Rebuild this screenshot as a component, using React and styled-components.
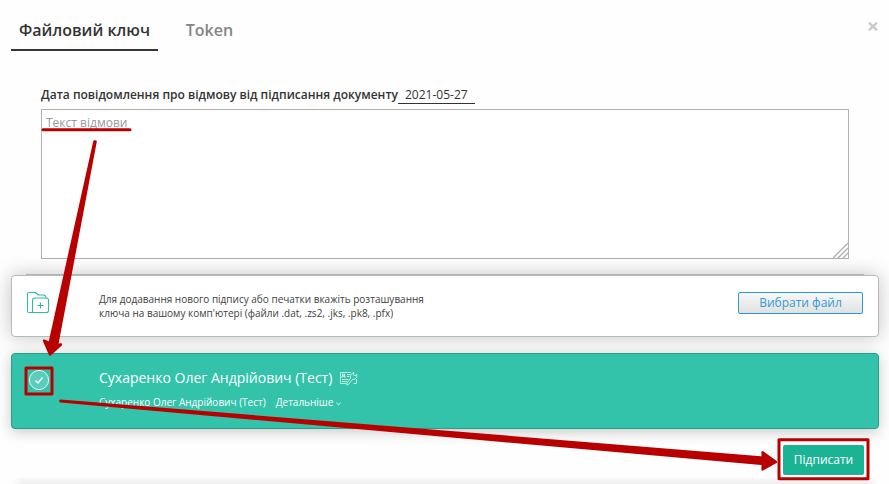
import React from "react";
import styled, { createGlobalStyle } from "styled-components";

const GlobalStyle = createGlobalStyle`
  *, *::before, *::after { box-sizing: border-box; }
  body { margin: 0; background: #fff; overflow: hidden; font-family: "Open Sans", "Noto Sans", sans-serif; color: #333; }
  button { font-family: inherit; padding: 0; }
`;

const Dialog = styled.main`
  position: relative;
  width: 889px;
  height: 484px;
  overflow: hidden;
  display: flex;
  flex-direction: column;
  padding: 0 10px 0 11px;
  background: #fefefe;
`;

const Header = styled.header`
  display: flex;
  flex: none;
  align-items: flex-start;
  justify-content: space-between;
  height: 51px;
`;

const Tabs = styled.nav`
  display: flex;
  gap: 20px;
  height: 51px;
`;

const Tab = styled.button`
  width: ${(p) => (p.$active ? 147 : 63)}px;
  height: 51px;
  padding-top: 10px;
  border: 0;
  border-bottom: 2px solid ${(p) => (p.$active ? "#333537" : "transparent")};
  background: none;
  color: ${(p) => (p.$active ? "#333" : "#858585")};
  font-size: 16px;
  font-weight: 600;
  line-height: 22px;
  white-space: nowrap;
`;

const CloseButton = styled.button`
  display: flex;
  margin: 22px 1px 0 0;
  border: 0;
  background: none;
`;

const Form = styled.section`
  flex: none;
  padding: 34px 30px 0;
  height: 224px;
`;

const DateRow = styled.div`
  display: flex;
  height: 24px;
  font-size: 12px;
  line-height: 20px;
  white-space: nowrap;
`;

const DateLabel = styled.span`
  width: 357px;
  font-weight: 600;
`;

const DateValue = styled.span`
  width: 77px;
  height: 19px;
  padding-left: 7px;
  border-bottom: 1px solid #333;
`;

const RefusalField = styled.div`
  display: flex;
  justify-content: space-between;
  height: 150px;
  padding: 4px 0 0 4px;
  border: 1px solid #b0b0b0;
  background: #fff;
  color: #999;
  font-size: 12px;
  line-height: 17px;
`;

const Grip = styled.svg`
  align-self: flex-end;
`;

const Card = styled.section`
  display: flex;
  flex: none;
  height: ${(p) => (p.$selected ? 76 : 62)}px;
  margin-bottom: 16px;
  border: 1px solid ${(p) => (p.$selected ? "#2b9d88" : "#b9b9b9")};
  border-radius: 4px;
  background: ${(p) => (p.$selected ? "#33c2aa" : "#fff")};
  color: ${(p) => (p.$selected ? "#fff" : "#404040")};
  box-shadow: ${(p) => (p.$selected ? "0 3px 14px rgba(0,0,0,.22)" : "0 0 20px rgba(0,0,0,.24)")};
`;

const IconCell = styled.div`
  width: 87px;
  padding: 15px 0 0 14px;
`;

const Hint = styled.p`
  flex: 1;
  margin: 16px 0 0;
  font-size: 10px;
  line-height: 14px;
`;

const ChooseButton = styled.button`
  width: 125px;
  height: 22px;
  margin: 16px 15px 0 0;
  border: 1px solid #249ad8;
  border-radius: 2px;
  background: linear-gradient(#f8f8f8, #e1e1e1);
  color: #309bd6;
  font-size: 12px;
  line-height: 20px;
`;

const Owner = styled.div`
  padding-top: 14px;
`;

const OwnerName = styled.h2`
  display: flex;
  align-items: center;
  gap: 7px;
  height: 20px;
  margin: 0;
  font-size: 14px;
  font-weight: 400;
  line-height: 20px;
  white-space: nowrap;
`;

const OwnerMeta = styled.div`
  display: flex;
  gap: 10px;
  margin-top: 7px;
  font-size: 10px;
  line-height: 14px;
`;

const Details = styled.span`
  display: flex;
  align-items: center;
  gap: 3px;

  svg { margin-top: 3px; }
`;

const Footer = styled.footer`
  display: flex;
  flex: none;
  justify-content: flex-end;
  height: 41px;
  padding-right: 15px;
`;

const SignButton = styled.button`
  width: 81px;
  height: 30px;
  border: 0;
  border-radius: 2px;
  background: #1ab394;
  color: #fff;
  font-size: 12px;
  line-height: 30px;
`;

const BottomShade = styled.div`
  flex: none;
  height: 10px;
  background: linear-gradient(transparent -40%, rgba(0, 0, 0, 0.08));
  margin: -8px 0 0;
  mask-image: linear-gradient(to right, transparent, #000 12px, #000 calc(100% - 12px), transparent);
`;

const Divider = styled.div`
  flex: none;
  height: 1px;
  margin: -1px 15px 0;
  background: #c9c9c9;
`;

const Marks = styled.svg`
  position: absolute;
  inset: 0;
  pointer-events: none;
`;

function FolderIcon() {
  return (
    <svg width="24" height="24" viewBox="0 0 24 24" fill="none" stroke="#2fbba4" strokeWidth="1.1" strokeLinejoin="round">
      <path d="M6.5 21.5H3Q1.5 21.5 1.5 20V3.5Q1.5 1.5 3.5 1.5H9.5L12.5 4H17.5Q19.7 4 20 7" />
      <path d="M6.5 21.5V9.5Q6.5 7 9 7H20Q22.5 7 22.5 9V19.5Q22.5 21.5 20.5 21.5H5.5" />
      <path d="M11.5 14.5H17.5M14.5 11.5V17.5" />
    </svg>
  );
}

function CheckIcon() {
  return (
    <svg width="26" height="24" viewBox="0 0 26 24" fill="none" stroke="#fff">
      <circle cx="13" cy="11" r="9.6" fill="#fff" fillOpacity=".2" strokeOpacity=".85" />
      <path d="M9.5 11.5L12 14L16.5 8.5" strokeWidth="1.4" />
    </svg>
  );
}

function KeyCardIcon() {
  return (
    <svg width="19" height="15" viewBox="0 0 19 15" fill="none" stroke="#fff" strokeWidth=".8" strokeOpacity=".85">
      <path d="M12 1.5H1.5V12.5H7.5M14.5 12.5H17.5V8" />
      <path d="M3 7V5.2H6V7M3.5 3H5.5V5H3.5ZM8 3.5H11M8 5.5H10.5M3 8.5H9.5M3 10.5H8" />
      <path d="M11.6 7.2Q10.8 4.8 12.5 3L15 1.4L14.3 3.7L16 4.8L17.8 3.3Q18.7 6.7 16 8Q14.8 8.6 13.7 8.3L9.4 13.5L7.8 14L8 12.1Z" />
    </svg>
  );
}

function Annotations() {
  return (
    <Marks width="889" height="484" viewBox="0 0 889 484" fill="none" stroke="#b90000" strokeLinecap="round" strokeLinejoin="round">
      <path d="M43 129.8H130" strokeWidth="3" />
      <path d="M94.5 141.5L95.5 141.5L57 345L49.5 344Z" fill="#b90000" strokeWidth="2.6" />
      <path d="M50 354.5L44 340.5L50 343L56 345L61 344.5Z" fill="#b90000" strokeWidth="2.4" />
      <rect x="26" y="368" width="26" height="26" strokeWidth="3" />
      <path d="M60.5 400.8L764 457.7L764 464L60.5 401.3Z" fill="#b90000" strokeWidth="2.6" />
      <path d="M776 462L762.5 452.3L763 461L762.5 469.5Z" fill="#b90000" strokeWidth="2.4" />
      <rect x="779" y="439.8" width="89" height="39" strokeWidth="3" />
    </Marks>
  );
}

export default function App() {
  return (
    <>
      <GlobalStyle />
      <Dialog>
        <Header>
          <Tabs>
            <Tab $active>Файловий ключ</Tab>
            <Tab>Token</Tab>
          </Tabs>
          <CloseButton aria-label="Закрити">
            <svg width="10" height="9" viewBox="0 0 10 9" stroke="#c9c9c9" strokeWidth="2.4">
              <path d="M1 .7L9 8.3M9 .7L1 8.3" />
            </svg>
          </CloseButton>
        </Header>
        <Form>
          <DateRow>
            <DateLabel>Дата повідомлення про відмову від підписання документу</DateLabel>
            <DateValue>2021-05-27</DateValue>
          </DateRow>
          <RefusalField>
            <span>Текст відмови</span>
            <Grip width="15" height="15" viewBox="0 0 15 15" stroke="#b0b0b0" strokeWidth="1.4">
              <path d="M0 15L15 0M5 15L15 5M10 15L15 10" />
            </Grip>
          </RefusalField>
        </Form>
        <Divider />
        <Card>
          <IconCell><FolderIcon /></IconCell>
          <Hint>
            Для додавання нового підпису або печатки вкажіть розташування<br />
            ключа на вашому комп'ютері (файли .dat, .zs2, .jks, .pk8, .pfx)
          </Hint>
          <ChooseButton>Вибрати файл</ChooseButton>
        </Card>
        <Card $selected>
          <IconCell><CheckIcon /></IconCell>
          <Owner>
            <OwnerName>Сухаренко Олег Андрійович (Тест)<KeyCardIcon /></OwnerName>
            <OwnerMeta>
              <span>Сухаренко Олег Андрійович (Тест)</span>
              <Details>
                Детальніше
                <svg width="5" height="4" viewBox="0 0 5 4" fill="none" stroke="#fff" strokeWidth=".9"><path d="M.4 .8L2.5 2.8L4.6 .8" /></svg>
              </Details>
            </OwnerMeta>
          </Owner>
        </Card>
        <Footer><SignButton>Підписати</SignButton></Footer>
        <BottomShade />
        <Annotations />
      </Dialog>
    </>
  );
}
